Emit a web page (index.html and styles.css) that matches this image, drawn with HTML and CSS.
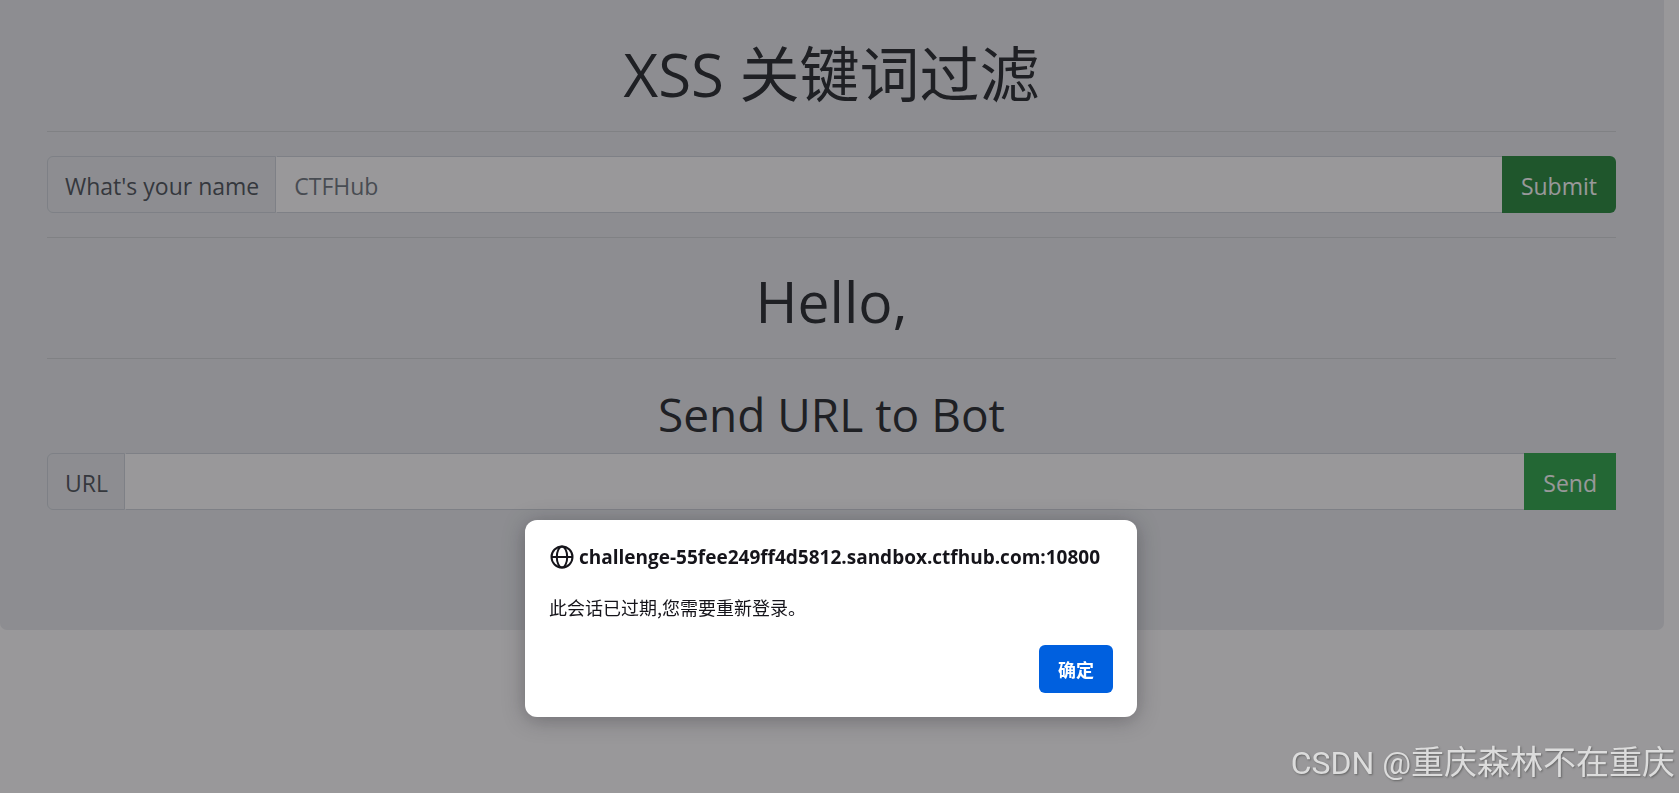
FILE: index.html
```html
<!DOCTYPE html>
<html lang="zh-CN">
<head>
<meta charset="utf-8">
<title>XSS 关键词过滤</title>
<link rel="stylesheet" href="styles.css">
</head>
<body>
<main class="jumbotron">
  <h1 class="title">XSS 关键词过滤</h1>
  <hr class="rule">
  <form class="input-group">
    <label class="input-label" for="name">What's your name</label>
    <input class="input-field" id="name" type="text" placeholder="CTFHub">
    <button class="btn btn-active" type="button">Submit</button>
  </form>
  <hr class="rule">
  <h1 class="title greeting">Hello,</h1>
  <hr class="rule">
  <h2 class="subtitle">Send URL to Bot</h2>
  <form class="input-group">
    <label class="input-label" for="url">URL</label>
    <input class="input-field" id="url" type="text">
    <button class="btn" type="button">Send</button>
  </form>
</main>
<div class="overlay">
  <section class="dialog" role="alertdialog" aria-labelledby="origin" aria-describedby="message">
    <header class="dialog-header">
      <svg class="globe" viewBox="0 0 24 24" aria-hidden="true">
        <circle cx="12" cy="12" r="10.5"/>
        <ellipse cx="12" cy="12" rx="5.2" ry="10.5"/>
        <path d="M1.5 12h21"/>
      </svg>
      <strong class="origin" id="origin">challenge-55fee249ff4d5812.sandbox.ctfhub.com:10800</strong>
    </header>
    <p class="message" id="message">此会话已过期,您需要重新登录。</p>
    <footer class="dialog-footer">
      <button class="confirm" type="button">确定</button>
    </footer>
  </section>
</div>
<div class="watermark"><span class="watermark-site">CSDN @</span>重庆森林不在重庆</div>
</body>
</html>
```
FILE: styles.css
```css
* { box-sizing: border-box; }
body {
  margin: 0;
  background: #fff;
  color: #212529;
  font-family: "Open Sans", "Noto Sans CJK SC", sans-serif;
  font-size: 23px;
  line-height: 36px;
}
.jumbotron {
  margin-right: 15px;
  padding: 35px 48px 120px 47px;
  background: #e9ecef;
  border-radius: 0 0 7px 7px;
}
.title, .subtitle {
  margin: 0;
  font-weight: 400;
  text-align: center;
}
.title { padding-top: 6px; font-size: 60px; line-height: 66px; }
.greeting { font-size: 57px; }
.subtitle { margin-bottom: 12px; padding-top: 4px; font-size: 46px; line-height: 54px; }
.rule {
  margin: 24px 0;
  border: 0;
  border-top: 1px solid #d2d5d7;
}
.input-group { display: flex; height: 57px; }
.input-label {
  display: flex;
  align-items: center;
  padding: 2px 16px 0 17px;
  border: 1px solid #ced4da;
  border-radius: 6px 0 0 6px;
  color: #495057;
}
.input-field {
  flex: 1;
  min-width: 0;
  padding: 2px 17px 0;
  border: solid #ced4da;
  border-width: 1px 0;
  border-left: 1px solid #fff;
  background: #fff;
  color: #495057;
  font: inherit;
}
.input-field::placeholder { color: #6c757d; opacity: 1; }
.btn {
  padding: 2px 19px 0;
  border: 0;
  background: #28a745;
  color: #fff;
  font: inherit;
}
.btn-active { background: #218838; border-radius: 0 6px 6px 0; }
.overlay {
  position: fixed;
  inset: 0;
  display: flex;
  justify-content: center;
  align-items: flex-end;
  padding: 0 17px 76px 0;
  background: rgba(28, 27, 32, .45);
}
.dialog {
  width: 612px;
  padding: 24px;
  border-radius: 12px;
  background: #fff;
  color: #15141a;
  box-shadow: 0 3px 21px rgba(28, 27, 34, .35);
  font-size: 18px;
  line-height: 24px;
}
.dialog-header { display: flex; align-items: center; gap: 5px; padding: 1px 0 0 1px; }
.globe {
  width: 24px;
  height: 24px;
  fill: none;
  stroke: #15141a;
  stroke-width: 2;
}
.origin { font-size: 19px; font-weight: 700; }
.message { margin: 26px 0; font-family: "Noto Sans CJK SC", sans-serif; }
.dialog-footer { display: flex; justify-content: flex-end; }
.confirm {
  height: 48px;
  padding: 0 19px;
  border: 0;
  border-radius: 6px;
  background: #0060df;
  color: #fff;
  font: 700 18px/24px "Noto Sans CJK SC", sans-serif;
}
.watermark {
  position: fixed;
  right: 4px;
  bottom: 6px;
  color: #dcdcdc;
  text-shadow: 1px 1px 2px #666;
  font: 33px/48px "Liberation Sans", "Noto Sans CJK SC", sans-serif;
}
.watermark-site { font-family: Roboto, sans-serif; font-size: 32px; }
```
